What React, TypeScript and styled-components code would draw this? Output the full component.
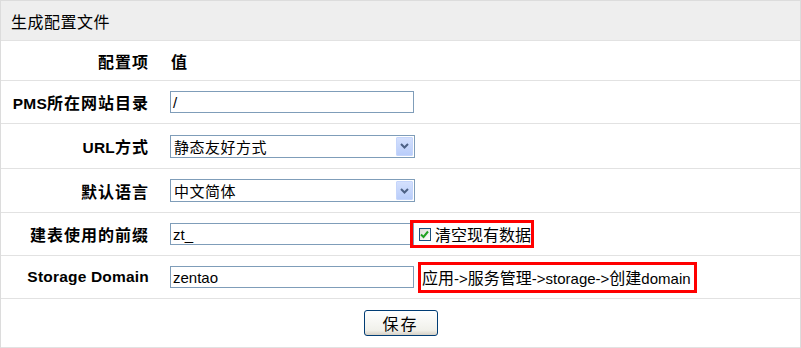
import React from "react";
import styled, { createGlobalStyle } from "styled-components";

const Global = createGlobalStyle`
  html, body { margin: 0; padding: 0; background: #fff; }
  body { font-family: "Liberation Sans", Arial, "Noto Sans CJK SC", sans-serif; color: #000; }
`;

const Panel = styled.div`
  width: 799px;
  border: 1px solid #dcdcdc;
  border-bottom: none;
  background: #fff;
`;

const Header = styled.div`
  height: 39px;
  background: #eeeeee;
  border-bottom: 1px solid #e2e2e2;
  display: flex;
  align-items: center;
  padding-left: 10px;
  font-size: 16px;
  letter-spacing: 0.5px;
`;

const Row = styled.div<{ $h: number }>`
  display: grid;
  grid-template-columns: 160px 1fr;
  height: ${(p) => p.$h - 1}px;
  border-bottom: 1px solid #e2e2e2;
  align-items: center;
`;

const Label = styled.div`
  text-align: right;
  padding-right: 12px;
  font-weight: bold;
  font-size: 15.5px;
  letter-spacing: 0.2px;
`;

const Han = styled.span<{ $sp?: number }>`
  font-size: 16px;
  letter-spacing: ${(p) => p.$sp ?? 0}px;
`;

const Value = styled.div`
  display: flex;
  align-items: center;
  padding-left: 9px;
  font-size: 15px;
`;

const HeadValue = styled(Value)`
  font-weight: bold;
  padding-left: 10px;
`;

const TextBox = styled.div`
  box-sizing: border-box;
  width: 244px;
  height: 22px;
  border: 1px solid #7f9db9;
  display: flex;
  align-items: center;
  padding-left: 2px;
  font-size: 15px;
`;

const SelectBox = styled.div`
  box-sizing: border-box;
  width: 245px;
  height: 23px;
  border: 1px solid #7f9db9;
  display: flex;
  align-items: center;
  justify-content: space-between;
  padding-left: 3px;
  font-size: 15px;
  letter-spacing: 0.5px;
`;

const DropBtn = styled.div`
  width: 15px;
  height: 17px;
  margin-right: 1px;
  border-radius: 1px;
  background: linear-gradient(#d4e0fd, #b9cdfa);
  border: 1px solid #c5d5fb;
  display: flex;
  align-items: center;
  justify-content: center;
`;

const RedBox = styled.div<{ $ml: number; $w: number; $h: number; $pl: number }>`
  box-sizing: border-box;
  margin-left: ${(p) => p.$ml}px;
  width: ${(p) => p.$w}px;
  height: ${(p) => p.$h}px;
  border: 3px solid #ff0000;
  display: flex;
  align-items: center;
  padding-left: ${(p) => p.$pl}px;
  font-size: 15px;
  gap: 4px;
  white-space: nowrap;
`;

const Check = styled.div`
  box-sizing: border-box;
  width: 13px;
  height: 13px;
  border: 1px solid #1c5180;
  background: linear-gradient(135deg, #dcdcd7, #fff);
  display: flex;
  align-items: center;
  justify-content: center;
`;

const SaveCell = styled.div`
  grid-column: 1 / span 2;
  display: flex;
  justify-content: center;
`;

const Button = styled.button`
  width: 74px;
  height: 26px;
  border: 1px solid #003c74;
  border-radius: 3px;
  background: linear-gradient(#ffffff, #f0f0ea 80%, #d6d0c5);
  font-family: "Liberation Sans", "Noto Sans CJK SC", sans-serif;
  font-size: 16px;
  letter-spacing: 2px;
  color: #000;
  padding: 0;
`;

const Chevron = () => (
  <svg width="9" height="6" viewBox="0 0 9 6">
    <path d="M1 1 L4.5 4.5 L8 1" stroke="#4d6185" strokeWidth="2" fill="none" />
  </svg>
);

const Tick = () => (
  <svg width="9" height="9" viewBox="0 0 9 9">
    <path d="M1 4.5 L3.5 7 L8 1.5" stroke="#21a121" strokeWidth="2" fill="none" />
  </svg>
);

export default function App() {
  return (
    <>
      <Global />
      <Panel>
        <Header>生成配置文件</Header>
        <Row $h={40}>
          <Label>
            <Han $sp={1}>配置项</Han>
          </Label>
          <HeadValue>
            <Han>值</Han>
          </HeadValue>
        </Row>
        <Row $h={43}>
          <Label>
            PMS<Han $sp={1}>所在网站目录</Han>
          </Label>
          <Value>
            <TextBox>/</TextBox>
          </Value>
        </Row>
        <Row $h={45}>
          <Label>
            URL<Han $sp={1}>方式</Han>
          </Label>
          <Value>
            <SelectBox>
              静态友好方式
              <DropBtn>
                <Chevron />
              </DropBtn>
            </SelectBox>
          </Value>
        </Row>
        <Row $h={44}>
          <Label>
            <Han $sp={1}>默认语言</Han>
          </Label>
          <Value>
            <SelectBox>
              中文简体
              <DropBtn>
                <Chevron />
              </DropBtn>
            </SelectBox>
          </Value>
        </Row>
        <Row $h={43}>
          <Label>
            <Han $sp={1}>建表使用的前缀</Han>
          </Label>
          <Value>
            <TextBox>zt_</TextBox>
            <RedBox $ml={-4} $w={124} $h={28} $pl={6}>
              <Check>
                <Tick />
              </Check>
              <Han>清空现有数据</Han>
            </RedBox>
          </Value>
        </Row>
        <Row $h={43}>
          <Label>Storage Domain</Label>
          <Value>
            <TextBox>zentao</TextBox>
            <RedBox $ml={4} $w={279} $h={31} $pl={1}>
              <span>
                <Han>应用</Han>-&gt;<Han>服务管理</Han>-&gt;storage-&gt;<Han>创建</Han>domain
              </span>
            </RedBox>
          </Value>
        </Row>
        <Row $h={49}>
          <SaveCell>
            <Button>保存</Button>
          </SaveCell>
        </Row>
      </Panel>
    </>
  );
}
